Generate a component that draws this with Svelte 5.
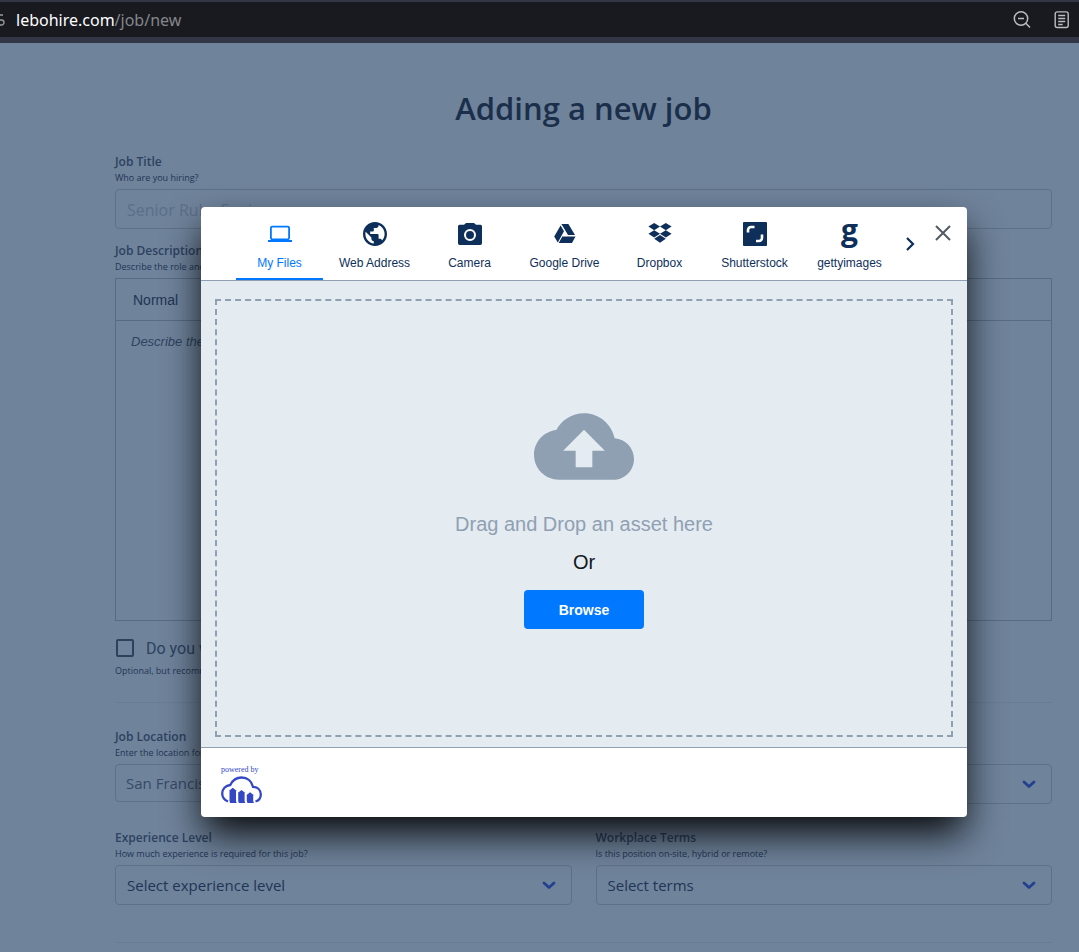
<script>
  const tabs = ['My Files', 'Web Address', 'Camera', 'Google Drive', 'Dropbox', 'Shutterstock', 'gettyimages'];
  let active = $state('My Files');
</script>

{#snippet chevron()}
  <svg class="chevron" viewBox="0 0 14 10" aria-hidden="true"><path d="M2 3l5 4.500 5-4.500" fill="none" stroke="currentColor" stroke-width="2.800" stroke-linecap="round" stroke-linejoin="round" /></svg>
{/snippet}

<div class="screen">
  <header class="browser">
    <svg class="site" viewBox="0 0 5 16" aria-hidden="true"><path d="M3 3H0M0 8h1.500a2.200 2.200 0 0 1 0 5H0" fill="none" stroke="#9a9a9e" stroke-width="1.300" /></svg>
    <span class="url">lebohire.com<span>/job/new</span></span>
    <button class="tool" aria-label="Zoom out">
      <svg viewBox="0 0 18 18" width="18" height="18"><g fill="none" stroke="currentColor" stroke-width="1.500"><circle cx="8" cy="7.500" r="6.700" /><path d="M5 7.500h6M12.800 12.300l4.200 4.200" /></g></svg>
    </button>
    <button class="tool" aria-label="Reader view">
      <svg viewBox="0 0 18 18" width="18" height="18"><rect x="2.200" y=".9" width="13" height="15.600" rx="2" fill="none" stroke="currentColor" stroke-width="1.400" /><path d="M5.200 4.500h7M5.200 7.500h7M5.200 10.500h7M5.200 13.500h4.500" stroke="currentColor" stroke-width="1.500" /></svg>
    </button>
  </header>

  <main>
    <h1>Adding a new job</h1>

    <div class="field">
      <label for="title">Job Title</label>
      <p class="hint">Who are you hiring?</p>
      <input id="title" type="text" placeholder="Senior Ruby Engineer" />
    </div>

    <div class="field">
      <label for="description">Job Description</label>
      <p class="hint">Describe the role and</p>
      <div class="editor">
        <div class="toolbar"><button>Normal</button></div>
        <textarea id="description" placeholder="Describe the"></textarea>
      </div>
    </div>

    <div class="option">
      <label class="check"><input type="checkbox" /> Do you want</label>
      <p class="hint">Optional, but recommended</p>
    </div>

    <hr />

    <div class="columns">
      <div class="field">
        <label for="location">Job Location</label>
        <p class="hint">Enter the location for</p>
        <input class="city" id="location" type="text" placeholder="San Francisco" />
      </div>
      <div class="field end">
        <div class="select"><select aria-label="Job type"><option></option></select>{@render chevron()}</div>
      </div>
      <div class="field">
        <label for="level">Experience Level</label>
        <p class="hint">How much experience is required for this job?</p>
        <div class="select"><select id="level"><option>Select experience level</option></select>{@render chevron()}</div>
      </div>
      <div class="field">
        <label for="terms">Workplace Terms</label>
        <p class="hint">Is this position on-site, hybrid or remote?</p>
        <div class="select"><select id="terms"><option>Select terms</option></select>{@render chevron()}</div>
      </div>
    </div>

    <hr />
  </main>

  <div class="overlay">
    <div class="dialog" role="dialog" aria-modal="true" aria-label="Upload">
      <div class="head">
        <div class="tabs" role="tablist">
          {#each tabs as tab}
            <button role="tab" class="tab" class:active={active === tab} aria-selected={active === tab} onclick={() => (active = tab)}>
              {#if tab === 'gettyimages'}
                <span class="getty" aria-hidden="true">g</span>
              {:else}
                <svg viewBox="0 0 24 24" width="24" height="24" fill="currentColor" aria-hidden="true">
                  {#if tab === 'My Files'}
                    <rect x="2.900" y="4.700" width="18.200" height="12.600" rx="1.200" fill="none" stroke="currentColor" stroke-width="1.800" /><path d="M0 18h24v2H0z" />
                  {:else if tab === 'Web Address'}
                    <g transform="scale(1.200) translate(-2 -2)"><path d="M12 2C6.480 2 2 6.480 2 12s4.480 10 10 10 10-4.480 10-10S17.520 2 12 2zm-1 17.930c-3.950-.49-7-3.850-7-7.930 0-.62.08-1.210.21-1.790L9 15v1c0 1.100.9 2 2 2v1.930zm6.900-2.540c-.26-.81-1-1.390-1.900-1.390h-1v-3c0-.55-.45-1-1-1H8v-2h2c.55 0 1-.45 1-1V7h2c1.100 0 2-.9 2-2v-.41c2.930 1.190 5 4.060 5 7.410 0 2.080-.8 3.970-2.100 5.390z" /></g>
                  {:else if tab === 'Camera'}
                    <path fill-rule="evenodd" d="M8 1h8l2 1.800h4.500A1.700 1.700 0 0 1 24 4.500v16.700a1.700 1.700 0 0 1-1.700 1.700H1.700A1.700 1.700 0 0 1 0 21.200V4.500a1.700 1.700 0 0 1 1.500-1.700H6zM12 7a6 6 0 1 0 0 12 6 6 0 0 0 0-12zm0 2a4 4 0 1 1 0 8 4 4 0 0 1 0-8z" />
                  {:else if tab === 'Google Drive'}
                    <path d="M8.400 2h7l6.600 11h-7zM7.600 3.400L11 9.300 4.800 20.500 1.200 14.600zM9.300 14.600h13.200L19 21H5.700z" />
                  {:else if tab === 'Dropbox'}
                    <path d="M6.200 1l5.800 3.600-5.800 3.600L.4 4.600zM17.800 1l5.800 3.600-5.800 3.600L12 4.600zM6.200 8.200l5.800 3.600-5.800 3.600-5.800-3.600zM17.800 8.200l5.800 3.600-5.800 3.600-5.800-3.600zM6.200 16.700l5.800-3.600 5.800 3.600L12 20.800z" />
                  {:else}
                    <rect width="24" height="24" rx="1" /><path d="M5 10.500V8A3 3 0 0 1 8 5H11.500M13 19h3A3 3 0 0 0 19 16V12.500" fill="none" stroke="#fff" stroke-width="2.600" />
                  {/if}
                </svg>
              {/if}
              <span>{tab}</span>
            </button>
          {/each}
        </div>
        <button class="next" aria-label="More sources"><svg viewBox="0 0 10 14" width="10" height="14"><path d="M2 1l6 6-6 6" fill="none" stroke="#0e2f5a" stroke-width="2.200" /></svg></button>
        <button class="close" aria-label="Close"><svg viewBox="0 0 16 16" width="16" height="16"><path d="M1 1l14 14M15 1L1 15" stroke="#535a63" stroke-width="2" /></svg></button>
      </div>

      <div class="body">
        <div class="drop">
          <svg class="cloud" viewBox="0 4 24 16" fill="#90a0b3" aria-hidden="true"><path d="M19.350 10.040C18.670 6.590 15.640 4 12 4 9.110 4 6.600 5.640 5.350 8.040 2.340 8.360 0 10.910 0 14c0 3.310 2.690 6 6 6h13c2.760 0 5-2.240 5-5 0-2.640-2.050-4.780-4.650-4.960zM14 13v4h-4v-4H7l5-5 5 5h-3z" /></svg>
          <p class="drag">Drag and Drop an asset here</p>
          <p class="or">Or</p>
          <button class="browse">Browse</button>
        </div>
      </div>

      <footer>
        <span>powered by</span>
        <svg viewBox="0 0 41 28" width="41" height="28" aria-hidden="true">
          <path d="M7 25.500C3.500 24 1.200 21 1.200 17.500 1.200 13 4.500 9.500 9.300 9 11.500 4.500 15.500 1.500 20.500 1.500c6 0 10.300 3.800 11.500 9.300 4.500.2 7.800 3.200 7.800 7.700 0 3.200-2 6-5.300 7" fill="none" stroke="#3448c5" stroke-width="2.300" />
          <path d="M7.800 15l4-3.300 4 3.300h-.8v10l.7 2H9.200l-.7-2V15zM16.700 17l3.800-3 3.800 3h-.7v8l.7 2h-6.400l-.7-2v-8zM25.300 19.200l3.800-3 3.800 3h-.7V25l.7 2h-6.400l-.7-2v-5.800z" fill="#3448c5" />
        </svg>
      </footer>
    </div>
  </div>
</div>

<style>
  :global(body) { margin: 0; background: #6f839b; }
  .screen, .screen * { box-sizing: border-box; }
  .screen { position: relative; min-height: 100vh; overflow: hidden; font-family: "Open Sans", sans-serif; color: #1f3555; }
  p, h1 { margin: 0; }
  button, input, select, textarea { font: inherit; color: inherit; background: none; border: 0; padding: 0; margin: 0; border-radius: 0; outline: 0; }
  button { cursor: pointer; }
  svg { display: block; flex: none; }

  .browser { display: flex; align-items: center; height: 43px; padding-right: 8px; background: #181a20; border-top: 2px solid #333645; border-bottom: 6px solid #333645; }
  .site { width: 5px; height: 16px; margin-right: 11px; }
  .url { flex: 1; font-family: "Noto Sans", sans-serif; font-size: 16px; color: #fff; }
  .url span { color: #85868a; }
  .tool { color: #bcbcbe; margin-left: 22px; }

  main { padding: 45px 27px 0 115px; }
  h1 { font-size: 31px; line-height: 40px; font-weight: 600; text-align: center; color: #1b2f4b; margin-bottom: 26px; }
  .field { display: flex; flex-direction: column; margin-bottom: 14px; }
  .field > label { font-size: 12px; line-height: 16px; font-weight: 600; color: #2c4260; }
  .hint { font-size: 9px; line-height: 16px; margin-bottom: 3px; }
  .field > input, .select { width: 100%; height: 40px; border: 1px solid #5d7189; border-radius: 4px; }
  .field > input { padding: 2px 11px 0; font-size: 16px; }
  input::placeholder { color: #5a6f89; opacity: 1; }
  .field > .city { height: 38px; font-size: 15px; padding: 0 10px; margin-bottom: 2px; }
  .city::placeholder { color: #354b68; }
  .editor { border: 1px solid #566b84; height: 343px; font-family: "Liberation Sans", sans-serif; display: flex; flex-direction: column; }
  .toolbar { height: 42px; flex: none; padding: 0 17px; display: flex; align-items: center; font-size: 14px; border-bottom: 1px solid #566b84; }
  textarea { flex: 1; resize: none; padding: 13px 15px; font-size: 13px; }
  textarea::placeholder { font-style: italic; color: #2d4360; opacity: 1; }
  .option { margin-top: 15px; }
  .check { display: flex; align-items: center; gap: 12px; height: 24px; font-family: Roboto, sans-serif; font-size: 16px; margin: 0 0 3px 1px; color: #2c4260; }
  .check input { appearance: none; width: 18px; height: 18px; border: 2px solid #2d415c; border-radius: 2px; }
  hr { border: 0; border-top: 1px solid #687d95; margin: 23px 0 26px; }
  .columns { display: grid; grid-template-columns: 1fr 1fr; column-gap: 24px; row-gap: 12px; }
  .end { justify-content: flex-end; }
  .select { display: flex; align-items: center; padding-right: 15px; }
  select { appearance: none; flex: 1; min-width: 0; height: 100%; padding-left: 11px; font-size: 15px; }
  .chevron { width: 14px; height: 10px; color: #234090; pointer-events: none; }

  .overlay { position: absolute; inset: 207px 0 0 89px; display: flex; justify-content: center; align-items: flex-start; font-family: "Liberation Sans", sans-serif; }
  .dialog { width: 766px; max-width: 100%; background: #fff; border-radius: 4px; box-shadow: 0 19px 38px -3px rgba(0, 0, 0, .95); }
  .head { display: flex; height: 74px; padding: 0 15px 0 35px; border-bottom: 1px solid #90a0b3; }
  .tabs { flex: 1; display: grid; grid-template-columns: repeat(7, 1fr); column-gap: 8px; }
  .tab { display: flex; flex-direction: column; align-items: center; gap: 9px; padding-top: 15px; color: #0e2f5a; font-size: 12px; line-height: 16px; border-bottom: 2px solid transparent; white-space: nowrap; }
  .active { color: #0078ff; border-color: #0078ff; }
  .getty { font-family: "Open Sans", sans-serif; font-weight: 700; font-size: 30px; line-height: 16px; height: 24px; }
  .next { margin-left: 12px; width: 10px; }
  .close { align-self: flex-start; margin: 18px 0 0 20px; width: 17px; }
  .body { padding: 18px 14px 10px; background: #e4ebf1; border-bottom: 1px solid #90a0b3; }
  .drop { display: flex; flex-direction: column; align-items: center; border: 2px dashed #90a0b3; padding: 112px 0 106px; }
  .cloud { width: 100px; height: 67px; }
  .drag, .or { font-size: 20px; line-height: 24px; }
  .drag { margin: 32px 0 14px; color: #90a0b3; }
  .or { color: #111820; margin-bottom: 16px; }
  .browse { width: 120px; height: 39px; border-radius: 4px; background: #0078ff; color: #fff; font-size: 14px; font-weight: 700; }
  footer { padding: 17px 20px 13px; }
  footer span { display: block; font-family: "Liberation Serif", serif; font-size: 8px; line-height: 10px; color: #3448c5; margin-bottom: 1px; }
</style>
